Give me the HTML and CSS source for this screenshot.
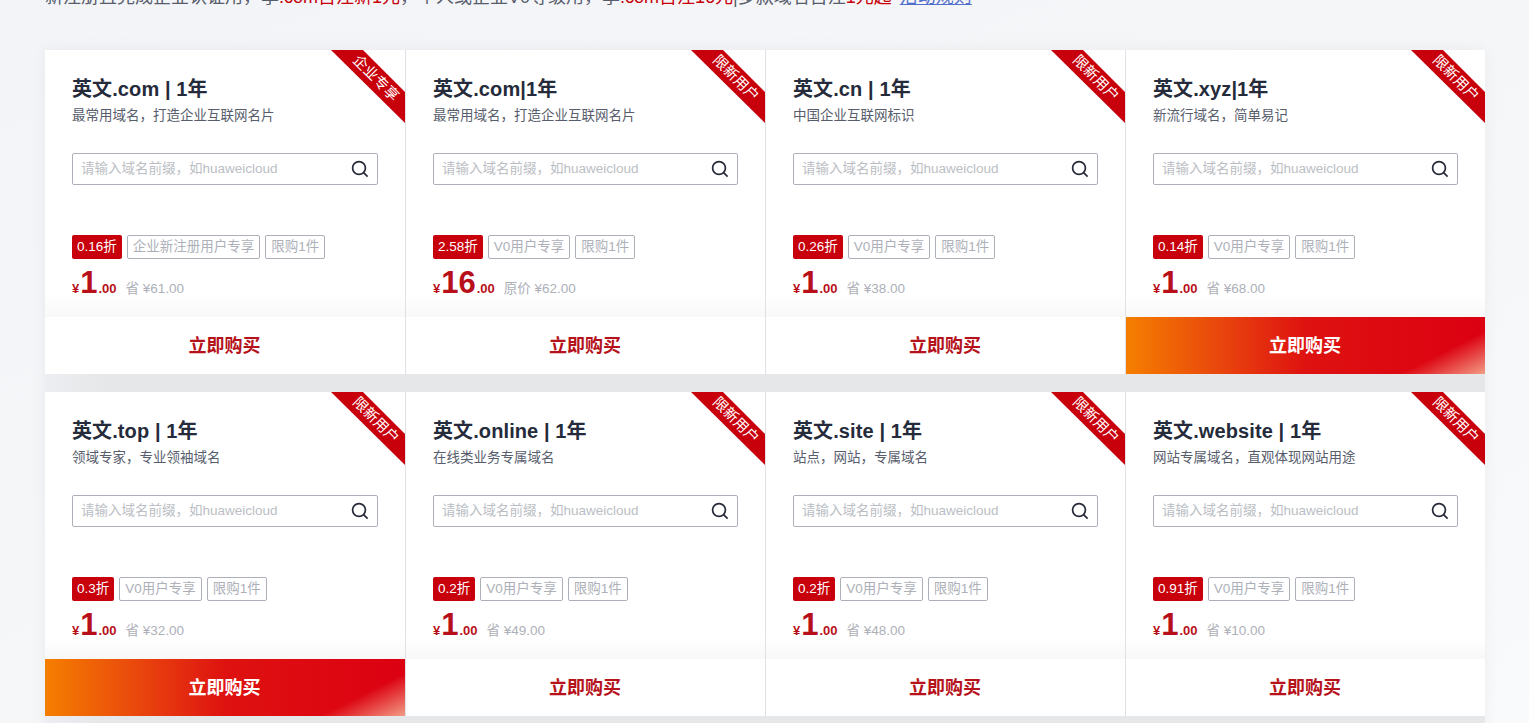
FILE: index.html
```html
<!DOCTYPE html>
<html lang="zh">
<head>
<meta charset="utf-8">
<title>域名活动</title>
<link rel="stylesheet" href="styles.css">
</head>
<body>
<main class="page">
<p class="notice">新注册且完成企业认证用，享<em>.com首注新1元</em>，个人或企业V0等级用，享<em>.com首注16元</em>|多款域名首注<em>1元起</em> <a href="#">活动规则</a></p>
<section class="grid">

<article class="card">
<span class="ribbon"><span>企业专享</span></span>
<div class="body">
<h3>英文.com | 1年</h3>
<p class="desc">最常用域名，打造企业互联网名片</p>
<div class="search"><span>请输入域名前缀，如huaweicloud</span><svg viewBox="0 0 18 18"><circle cx="8" cy="8" r="6.4"/><path d="M12.6 12.6 16.6 16.6"/></svg></div>
<div class="tags"><b>0.16折</b><i>企业新注册用户专享</i><i>限购1件</i></div>
<div class="price"><small>¥</small><strong>1</strong><small class="dec">.00</small><span>省 ¥61.00</span></div>
</div>
<a class="buy" href="#">立即购买</a>
</article>

<article class="card">
<span class="ribbon"><span>限新用户</span></span>
<div class="body">
<h3>英文.com|1年</h3>
<p class="desc">最常用域名，打造企业互联网名片</p>
<div class="search"><span>请输入域名前缀，如huaweicloud</span><svg viewBox="0 0 18 18"><circle cx="8" cy="8" r="6.4"/><path d="M12.6 12.6 16.6 16.6"/></svg></div>
<div class="tags"><b>2.58折</b><i>V0用户专享</i><i>限购1件</i></div>
<div class="price"><small>¥</small><strong>16</strong><small class="dec">.00</small><span>原价 ¥62.00</span></div>
</div>
<a class="buy" href="#">立即购买</a>
</article>

<article class="card">
<span class="ribbon"><span>限新用户</span></span>
<div class="body">
<h3>英文.cn | 1年</h3>
<p class="desc">中国企业互联网标识</p>
<div class="search"><span>请输入域名前缀，如huaweicloud</span><svg viewBox="0 0 18 18"><circle cx="8" cy="8" r="6.4"/><path d="M12.6 12.6 16.6 16.6"/></svg></div>
<div class="tags"><b>0.26折</b><i>V0用户专享</i><i>限购1件</i></div>
<div class="price"><small>¥</small><strong>1</strong><small class="dec">.00</small><span>省 ¥38.00</span></div>
</div>
<a class="buy" href="#">立即购买</a>
</article>

<article class="card">
<span class="ribbon"><span>限新用户</span></span>
<div class="body">
<h3>英文.xyz|1年</h3>
<p class="desc">新流行域名，简单易记</p>
<div class="search"><span>请输入域名前缀，如huaweicloud</span><svg viewBox="0 0 18 18"><circle cx="8" cy="8" r="6.4"/><path d="M12.6 12.6 16.6 16.6"/></svg></div>
<div class="tags"><b>0.14折</b><i>V0用户专享</i><i>限购1件</i></div>
<div class="price"><small>¥</small><strong>1</strong><small class="dec">.00</small><span>省 ¥68.00</span></div>
</div>
<a class="buy active" href="#">立即购买</a>
</article>

<article class="card">
<span class="ribbon"><span>限新用户</span></span>
<div class="body">
<h3>英文.top | 1年</h3>
<p class="desc">领域专家，专业领袖域名</p>
<div class="search"><span>请输入域名前缀，如huaweicloud</span><svg viewBox="0 0 18 18"><circle cx="8" cy="8" r="6.4"/><path d="M12.6 12.6 16.6 16.6"/></svg></div>
<div class="tags"><b>0.3折</b><i>V0用户专享</i><i>限购1件</i></div>
<div class="price"><small>¥</small><strong>1</strong><small class="dec">.00</small><span>省 ¥32.00</span></div>
</div>
<a class="buy active" href="#">立即购买</a>
</article>

<article class="card">
<span class="ribbon"><span>限新用户</span></span>
<div class="body">
<h3>英文.online | 1年</h3>
<p class="desc">在线类业务专属域名</p>
<div class="search"><span>请输入域名前缀，如huaweicloud</span><svg viewBox="0 0 18 18"><circle cx="8" cy="8" r="6.4"/><path d="M12.6 12.6 16.6 16.6"/></svg></div>
<div class="tags"><b>0.2折</b><i>V0用户专享</i><i>限购1件</i></div>
<div class="price"><small>¥</small><strong>1</strong><small class="dec">.00</small><span>省 ¥49.00</span></div>
</div>
<a class="buy" href="#">立即购买</a>
</article>

<article class="card">
<span class="ribbon"><span>限新用户</span></span>
<div class="body">
<h3>英文.site | 1年</h3>
<p class="desc">站点，网站，专属域名</p>
<div class="search"><span>请输入域名前缀，如huaweicloud</span><svg viewBox="0 0 18 18"><circle cx="8" cy="8" r="6.4"/><path d="M12.6 12.6 16.6 16.6"/></svg></div>
<div class="tags"><b>0.2折</b><i>V0用户专享</i><i>限购1件</i></div>
<div class="price"><small>¥</small><strong>1</strong><small class="dec">.00</small><span>省 ¥48.00</span></div>
</div>
<a class="buy" href="#">立即购买</a>
</article>

<article class="card">
<span class="ribbon"><span>限新用户</span></span>
<div class="body">
<h3>英文.website | 1年</h3>
<p class="desc">网站专属域名，直观体现网站用途</p>
<div class="search"><span>请输入域名前缀，如huaweicloud</span><svg viewBox="0 0 18 18"><circle cx="8" cy="8" r="6.4"/><path d="M12.6 12.6 16.6 16.6"/></svg></div>
<div class="tags"><b>0.91折</b><i>V0用户专享</i><i>限购1件</i></div>
<div class="price"><small>¥</small><strong>1</strong><small class="dec">.00</small><span>省 ¥10.00</span></div>
</div>
<a class="buy" href="#">立即购买</a>
</article>

</section>
</main>
</body>
</html>
```
FILE: styles.css
```css
* { box-sizing: border-box; }
html, body { margin: 0; height: 100%; overflow: hidden; }
body {
  background: linear-gradient(160deg, #f3f4f7 0%, #f6f7f9 60%, #f9fafb 100%);
  font-family: "Liberation Sans", "Noto Sans CJK SC", sans-serif;
  color: #252b3a;
}
.page { width: 1440px; margin-left: 45px; }
.notice {
  margin: -15px 0 0;
  height: 65px;
  font-size: 18px;
  line-height: 24px;
  color: #575d6c;
  white-space: nowrap;
}
.notice em { font-style: normal; color: #c7000b; }
.notice a { margin-left: 3px; color: #526ecc; text-decoration: underline; }
.grid {
  display: grid;
  grid-template-columns: repeat(4, 360px);
  grid-auto-rows: 324px;
  row-gap: 18px;
  padding-bottom: 18px;
  background: linear-gradient(90deg, #eceef1 0, #e6e7e9 60px);
  box-shadow: 0 0 16px rgba(0, 0, 0, .05);
}
.card {
  position: relative;
  display: flex;
  flex-direction: column;
  background: #fff;
  border-left: 1px solid #dfe1e6;
  overflow: hidden;
}
.card:nth-child(4n+1) { border-left: 0; }
.ribbon {
  position: absolute;
  top: 0;
  right: 0;
  width: 74px;
  height: 73px;
  background: #c7000b;
  clip-path: polygon(0 0, 32px 0, 100% 42px, 100% 100%);
}
.ribbon span {
  position: absolute;
  left: 9px;
  top: 19px;
  width: 72px;
  text-align: center;
  transform: rotate(45deg);
  font-size: 14.5px;
  line-height: 18px;
  color: #fff;
  white-space: nowrap;
}
.body {
  flex: 1;
  padding: 26px 27px 0;
  background: linear-gradient(to bottom, #fff 0, #fff 245px, #f8f8f9 267px);
}
h3 {
  margin: 0;
  font-size: 20px;
  line-height: 26px;
  font-weight: 700;
  letter-spacing: .1px;
  color: #252b3a;
  white-space: nowrap;
}
.desc {
  margin: 4px 0 0;
  font-size: 13.5px;
  line-height: 20px;
  color: #575d6c;
  white-space: nowrap;
}
.search {
  display: flex;
  align-items: center;
  justify-content: space-between;
  height: 32px;
  margin-top: 27px;
  padding: 0 8px 0 8px;
  border: 1px solid #adb0b8;
  border-radius: 2px;
  font-size: 13.5px;
  color: #bbbec4;
}
.search span { margin-bottom: 4px; }
.search svg {
  width: 18px;
  height: 18px;
  fill: none;
  stroke: #252b3a;
  stroke-width: 1.7;
}
.tags {
  display: flex;
  gap: 5px;
  margin-top: 50px;
  height: 24px;
  font-size: 13.5px;
  line-height: 22px;
}
.tags b {
  padding: 1px 5px;
  border-radius: 2px;
  background: #c7000b;
  color: #fff;
  font-weight: 400;
}
.tags i {
  padding: 0 5px;
  border: 1px solid #adb0b8;
  border-radius: 2px;
  color: #adb0b8;
  font-style: normal;
}
.price {
  display: flex;
  align-items: baseline;
  height: 36px;
  margin-top: 4px;
  color: #b8101a;
  font-weight: 700;
  white-space: nowrap;
}
.price small { font-size: 13px; }
.price strong { font-size: 31px; line-height: 40px; margin: 0 1px 0 1px; }
.price span {
  margin-left: 9px;
  font-size: 13.5px;
  font-weight: 400;
  color: #adb0b8;
}
.buy {
  display: block;
  height: 57px;
  padding-right: 1px;
  line-height: 58px;
  text-align: center;
  font-size: 18px;
  font-weight: 700;
  color: #b5121b;
  text-decoration: none;
  background: #fff;
}
.buy.active {
  color: #fff;
  background:
    linear-gradient(153deg, rgba(244, 165, 140, 0) 82%, rgba(244, 165, 140, .95) 100%),
    linear-gradient(90deg, #f57f00 0%, #e8420e 28%, #de1210 50%, #dc0012 100%);
}
```
